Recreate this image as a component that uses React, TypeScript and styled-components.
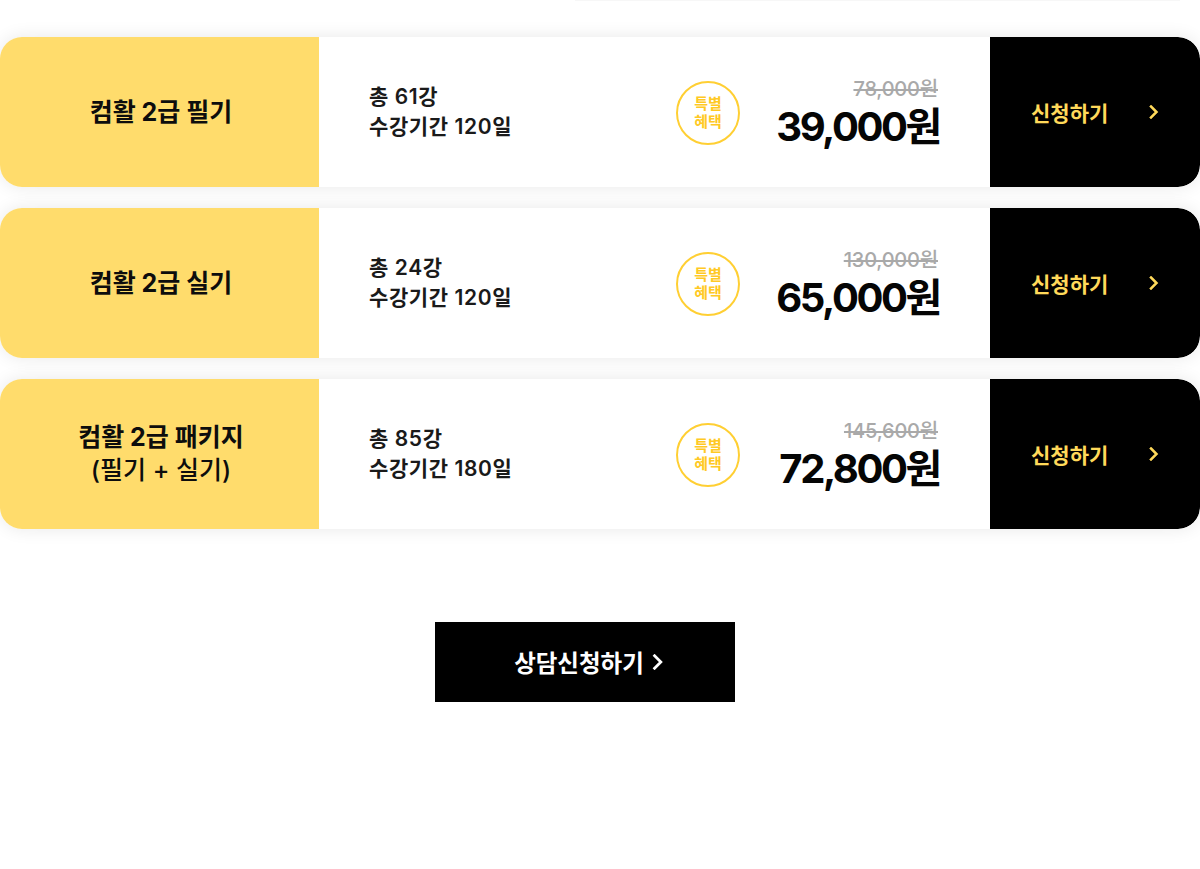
import React from 'react'
import styled, { createGlobalStyle } from 'styled-components'

const GlobalStyle = createGlobalStyle`
  body {
    margin: 0;
    background: #fff;
    font-family: Inter, 'Noto Sans CJK KR', sans-serif;
    color: #111;
  }
`

type Course = {
  title: string[]
  lectures: number
  days: number
  original: string
  price: string
}

const courses: Course[] = [
  { title: ['컴활 2급 필기'], lectures: 61, days: 120, original: '78,000원', price: '39,000원' },
  { title: ['컴활 2급 실기'], lectures: 24, days: 120, original: '130,000원', price: '65,000원' },
  {
    title: ['컴활 2급 패키지', '(필기 + 실기)'],
    lectures: 85,
    days: 180,
    original: '145,600원',
    price: '72,800원',
  },
]

const Chevron = ({ size = 14, color = '#fff', stroke = 3 }: { size?: number; color?: string; stroke?: number }) => (
  <svg width={size} height={size} viewBox="0 0 14 14" fill="none">
    <path d="M4 1.5 L9.5 7 L4 12.5" stroke={color} strokeWidth={stroke} strokeLinecap="square" />
  </svg>
)

function App() {
  return (
    <Page>
      <GlobalStyle />
      <TopLine />
      <CardList>
        {courses.map((c) => (
          <Card key={c.price}>
            <Title>
              {c.title.map((line) => (
                <span key={line}>{line}</span>
              ))}
            </Title>
            <Body>
              <Info>
                <span>총 {c.lectures}강</span>
                <span>수강기간 {c.days}일</span>
              </Info>
              <Badge>
                특별
                <br />
                혜택
              </Badge>
              <Prices>
                <Original>{c.original}</Original>
                <Price>{c.price}</Price>
              </Prices>
            </Body>
            <Apply>
              <span>신청하기</span>
              <Chevron size={14} color="#FFD95A" stroke={2.5} />
            </Apply>
          </Card>
        ))}
      </CardList>
      <ConsultRow>
        <ConsultButton>
          상담신청하기
          <Chevron size={16} color="#fff" stroke={2.4} />
        </ConsultButton>
      </ConsultRow>
    </Page>
  )
}

const Page = styled.div`
  width: 1200px;
  height: 869px;
  overflow: hidden;
`

const TopLine = styled.div`
  height: 1px;
  margin-left: 575px;
  width: 605px;
  background: #f7f7f7;
`

const CardList = styled.div`
  display: flex;
  flex-direction: column;
  gap: 21px;
  padding-top: 36px;
`

const Card = styled.div`
  display: grid;
  grid-template-columns: 319px 1fr 210px;
  height: 150px;
  border-radius: 22px;
  overflow: hidden;
  background: #fff;
  box-shadow: 0 0 18px rgba(0, 0, 0, 0.09);
`

const Title = styled.div`
  background: #ffdc6c;
  display: flex;
  flex-direction: column;
  align-items: center;
  justify-content: center;
  font-size: 25px;
  font-weight: 700;
  line-height: 33px;
  color: #0d0d0d;
  padding-left: 3px;
  span + span {
    font-weight: 500;
  }
`

const Body = styled.div`
  display: flex;
  align-items: center;
  padding: 0 50px 0 50px;
`

const Info = styled.div`
  display: flex;
  flex-direction: column;
  font-size: 21px;
  font-weight: 600;
  line-height: 30px;
  color: #1a1a1a;
  letter-spacing: 0.6px;
  flex: 1;
`

const Badge = styled.div`
  width: 60px;
  height: 60px;
  border: 2px solid #ffcf33;
  border-radius: 50%;
  display: flex;
  align-items: center;
  justify-content: center;
  text-align: center;
  font-size: 15px;
  font-weight: 700;
  line-height: 18px;
  color: #ffc924;
  margin-top: 2px;
`

const Prices = styled.div`
  display: flex;
  flex-direction: column;
  align-items: flex-end;
  width: 200px;
  margin: 2px 0 0 0;
  white-space: nowrap;
`

const Original = styled.span`
  font-size: 20px;
  font-weight: 500;
  line-height: 24px;
  color: #a9a9a9;
  text-decoration: line-through;
  letter-spacing: -0.2px;
  margin-right: 2px;
  margin-bottom: 3px;
`

const Price = styled.span`
  font-size: 40px;
  font-weight: 700;
  line-height: 46px;
  color: #050505;
  letter-spacing: -2.4px;
`

const Apply = styled.div`
  background: #000;
  border-radius: 0 22px 22px 0;
  display: flex;
  align-items: center;
  justify-content: space-between;
  padding: 0 39px 0 41px;
  font-size: 21px;
  font-weight: 700;
  color: #ffd95a;
`

const ConsultRow = styled.div`
  display: flex;
  justify-content: center;
  padding: 93px 30px 0 0;
`

const ConsultButton = styled.div`
  width: 290px;
  height: 80px;
  padding-left: 10px;
  background: #000;
  display: flex;
  align-items: center;
  justify-content: center;
  gap: 6px;
  font-size: 23.5px;
  font-weight: 700;
  color: #fff;
`

export default App
